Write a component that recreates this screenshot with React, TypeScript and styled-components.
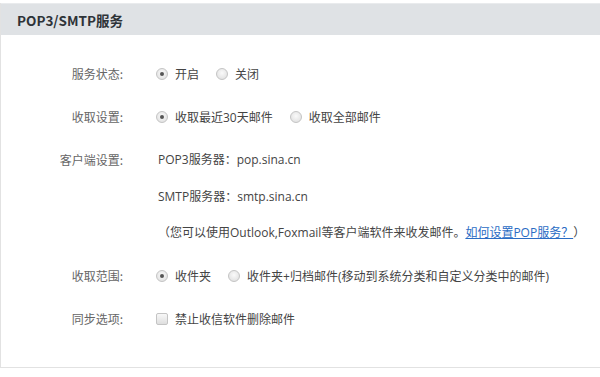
import React from 'react'
import styled, { createGlobalStyle } from 'styled-components'

const GlobalStyle = createGlobalStyle`
  html, body {
    margin: 0;
    padding: 0;
    background: #fff;
  }
  body {
    font-family: "Noto Sans CJK SC", "Noto Sans", sans-serif;
    font-size: 12px;
    color: #444;
  }
`

const Panel = styled.section`
  margin-top: 3px;
  width: 600px;
  height: 365px;
  box-sizing: border-box;
  border-left: 1px solid #e2e2e2;
  border-bottom: 1px solid #e2e2e2;
  display: flex;
  flex-direction: column;
`

const Header = styled.div`
  height: 31px;
  background: #dfe2e5;
  border-top: 1px solid #e9ebed;
  display: flex;
  align-items: center;
  padding-left: 16px;
  font-family: "Noto Sans CJK SC", "Noto Sans", sans-serif;
  font-weight: 700;
  font-size: 13.5px;
  color: #2e3338;
`

const Form = styled.div`
  display: flex;
  flex-direction: column;
  gap: 23px;
  padding-top: 29px;
`

const Row = styled.div`
  display: grid;
  grid-template-columns: 122px 1fr;
  column-gap: 33px;
  align-items: start;
`

const Label = styled.div`
  text-align: right;
  line-height: 20px;
  color: #666;
`

const Lines = styled.div`
  display: flex;
  flex-direction: column;
  gap: 16.5px;
`

const Line = styled.div`
  line-height: 20px;
  color: #444;
  white-space: nowrap;
  padding-left: 2px;
  font-family: "Open Sans", "Noto Sans CJK SC", sans-serif;
`

const Options = styled.div`
  display: flex;
  align-items: center;
  height: 20px;
  white-space: nowrap;
`

const Option = styled.label`
  display: flex;
  align-items: center;
  margin-right: 17px;
  color: #444;
  font-family: "Open Sans", "Noto Sans CJK SC", sans-serif;
`

const Radio = styled.span<{ $checked?: boolean }>`
  width: 10px;
  height: 10px;
  border-radius: 50%;
  border: 1px solid #c4c4c4;
  background: radial-gradient(circle at 50% 40%, #fafafa, #dcdcdc);
  margin-right: 7px;
  display: flex;
  align-items: center;
  justify-content: center;
  &::after {
    content: '';
    width: 4px;
    height: 4px;
    border-radius: 50%;
    background: ${(p) => (p.$checked ? '#555' : 'transparent')};
  }
`

const Checkbox = styled.span`
  width: 10px;
  height: 10px;
  border: 1px solid #c4c4c4;
  border-radius: 2px;
  background: linear-gradient(#f8f8f8, #dedede);
  margin-right: 7px;
`

const Link = styled.a`
  color: #2a6cc4;
  text-decoration: underline;
`

export default function App() {
  return (
    <>
      <GlobalStyle />
      <Panel>
        <Header>POP3/SMTP服务</Header>
        <Form>
          <Row>
            <Label>服务状态:</Label>
            <Options>
              <Option>
                <Radio $checked />
                开启
              </Option>
              <Option>
                <Radio />
                关闭
              </Option>
            </Options>
          </Row>
          <Row>
            <Label>收取设置:</Label>
            <Options>
              <Option>
                <Radio $checked />
                收取最近30天邮件
              </Option>
              <Option>
                <Radio />
                收取全部邮件
              </Option>
            </Options>
          </Row>
          <Row>
            <Label>客户端设置:</Label>
            <Lines>
              <Line>POP3服务器：pop.sina.cn</Line>
              <Line>SMTP服务器：smtp.sina.cn</Line>
              <Line>
                （您可以使用Outlook,Foxmail等客户端软件来收发邮件。<Link href="#">如何设置POP服务？</Link>）
              </Line>
            </Lines>
          </Row>
          <Row>
            <Label>收取范围:</Label>
            <Options>
              <Option>
                <Radio $checked />
                收件夹
              </Option>
              <Option>
                <Radio />
                收件夹+归档邮件(移动到系统分类和自定义分类中的邮件)
              </Option>
            </Options>
          </Row>
          <Row>
            <Label>同步选项:</Label>
            <Options>
              <Option>
                <Checkbox />
                禁止收信软件删除邮件
              </Option>
            </Options>
          </Row>
        </Form>
      </Panel>
    </>
  )
}
